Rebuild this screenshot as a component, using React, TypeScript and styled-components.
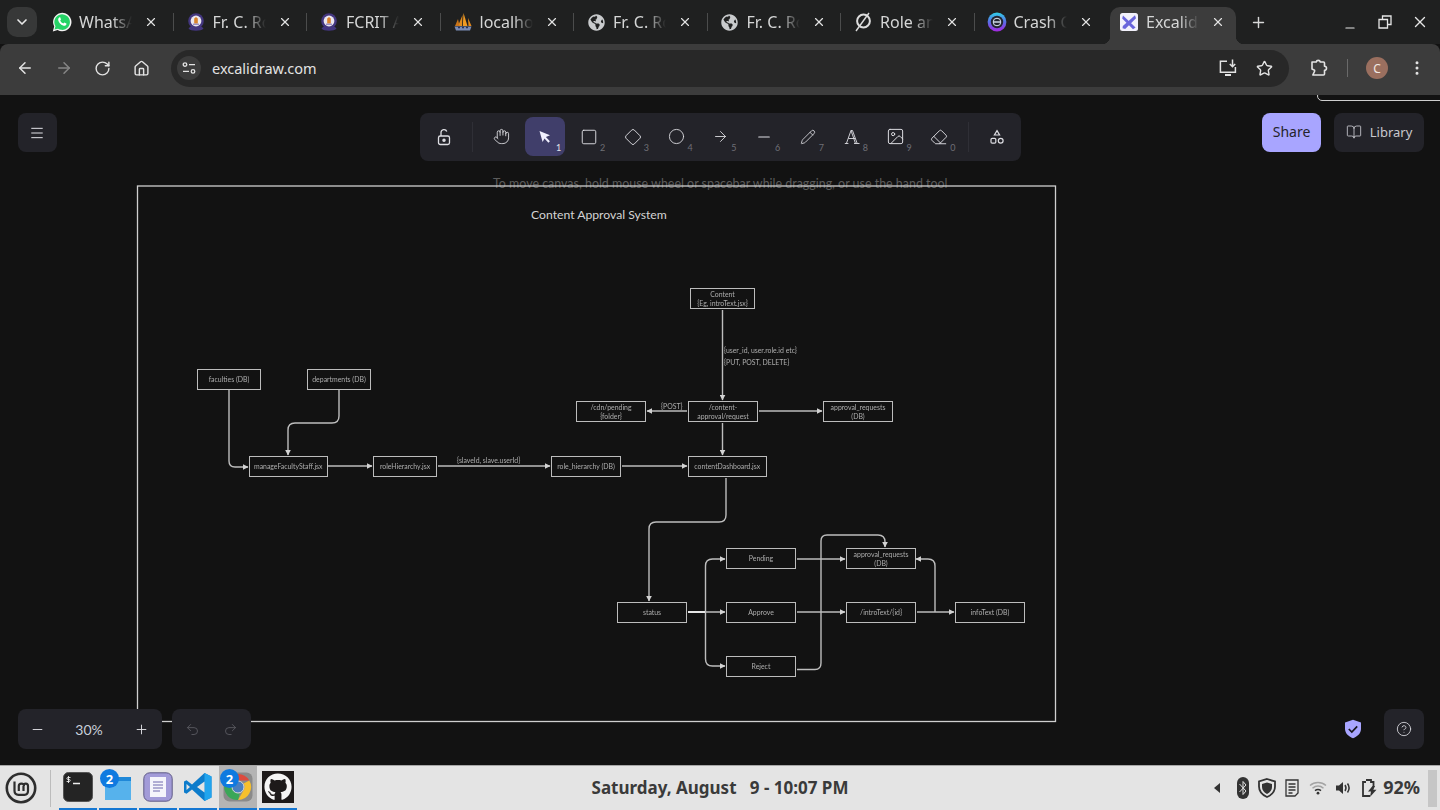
import React from 'react';
import styled, { createGlobalStyle } from 'styled-components';
import {
  ArrowLeft, ArrowRight, Circle, Diamond, Eraser, Hand, Home, Image as ImageIcon,
  Menu, Minus, MoreVertical, Pencil, Plus, RotateCw, Square, Star, X, ChevronDown,
  Redo2, Undo2, CircleHelp, BookOpen, Minus as LineIcon,
} from 'lucide-react';
import { FaGlobeAmericas, FaGithub } from 'react-icons/fa';

const CHROME_FONT = '"Noto Sans", "Open Sans", sans-serif';
const APP_FONT = 'Lato, "Noto Sans", sans-serif';
const CANVAS_TOP = 95;

const Global = createGlobalStyle`
  html, body { margin: 0; padding: 0; height: 100%; overflow: hidden; background: #121212; }
  #root { height: 100%; }
  * { box-sizing: border-box; }
`;

const Page = styled.div`
  width: 1440px;
  height: 810px;
  display: flex;
  flex-direction: column;
  font-family: ${CHROME_FONT};
  overflow: hidden;
`;

/* ---- browser tabs ---- */
const TabStrip = styled.div`
  height: 44px;
  background: #1f2020;
  display: flex;
  align-items: flex-start;
  padding-left: 7px;
`;
const TabSearch = styled.div`
  width: 30px;
  height: 30px;
  margin: 7px 3px 0 0;
  border-radius: 10px;
  background: #373838;
  color: #e8e8e8;
  display: flex;
  align-items: center;
  justify-content: center;
`;
const Tab = styled.div<{ $active?: boolean; $sep?: boolean }>`
  position: relative;
  width: ${p => (p.$active ? '126px' : '133.5px')};
  height: ${p => (p.$active ? '37px' : '30px')};
  margin: ${p => (p.$active ? '7px 0 0 2px' : '7px 0 0 0')};
  padding-left: ${p => (p.$active ? '9px' : '12px')};
  padding-bottom: ${p => (p.$active ? '7px' : '0')};
  display: flex;
  align-items: center;
  align-self: flex-start;
  color: #d5d6d6;
  background: ${p => (p.$active ? '#3c3c3c' : 'transparent')};
  border-radius: 10px 10px 0 0;

  &::after {
    content: '';
    display: ${p => (p.$sep ? 'block' : 'none')};
    position: absolute;
    right: 0;
    top: 6px;
    width: 1px;
    height: 18px;
    background: #4b4c4c;
  }
  &::before {
    content: '';
    display: ${p => (p.$active ? 'block' : 'none')};
    position: absolute;
    left: -8px;
    right: -8px;
    bottom: 0;
    height: 8px;
    background:
      radial-gradient(circle at 0 0, #1f2020 8px, #3c3c3c 8.5px) left / 8px 8px no-repeat,
      radial-gradient(circle at 100% 0, #1f2020 8px, #3c3c3c 8.5px) right / 8px 8px no-repeat;
  }
`;
const Favicon = styled.span`
  width: 20px;
  height: 20px;
  flex: none;
  display: flex;
  align-items: center;
  justify-content: center;
`;
const TabTitle = styled.span`
  width: 54px;
  margin-left: 7px;
  font-size: 16px;
  line-height: 22px;
  white-space: nowrap;
  overflow: hidden;
  -webkit-mask-image: linear-gradient(90deg, #000 62%, transparent 98%);
  mask-image: linear-gradient(90deg, #000 62%, transparent 98%);
`;
const TabClose = styled.span`
  margin-left: 11px;
  display: flex;
  color: #e2e2e2;
`;
const NewTab = styled.div`
  width: 30px;
  height: 30px;
  margin: 7px 0 0 7px;
  color: #d8d8d8;
  display: flex;
  align-items: center;
  justify-content: center;
`;
const WindowControls = styled.div`
  margin-left: auto;
  height: 44px;
  padding-right: 3px;
  display: flex;
  align-items: center;
  color: #e6e6e6;
`;
const WindowButton = styled.span<{ $low?: boolean }>`
  width: 35px;
  display: flex;
  justify-content: center;
  padding-top: ${p => (p.$low ? '12px' : '0')};
`;

/* ---- browser toolbar ---- */
const BrowserBar = styled.div`
  height: 51px;
  background: #3c3c3c;
  border-radius: 8px 8px 0 0;
  display: flex;
  align-items: center;
  padding: 0 0 3px 5px;
`;
const NavButton = styled.span<{ $dim?: boolean; $push?: number }>`
  width: 39px;
  height: 36px;
  flex: none;
  margin-left: ${p => p.$push ?? 0}px;
  display: flex;
  align-items: center;
  justify-content: center;
  color: ${p => (p.$dim ? '#868686' : '#e3e3e3')};
`;
const Omnibox = styled.div`
  width: 1118px;
  height: 37px;
  margin: 0 10px;
  flex: none;
  border-radius: 19px;
  background: #282828;
  display: flex;
  align-items: center;
  padding: 0 7px 0 6px;
  color: #e3e3e3;
`;
const SiteChip = styled.span`
  width: 24px;
  height: 24px;
  border-radius: 50%;
  background: #3c3c3c;
  display: flex;
  align-items: center;
  justify-content: center;
`;
const Url = styled.span`
  margin-left: 11px;
  font-size: 14.5px;
  flex: 1;
`;
const OmniIcon = styled.span`
  width: 36px;
  display: flex;
  justify-content: center;
`;
const BarDivider = styled.span`
  width: 1px;
  height: 18px;
  background: #6a6a6a;
  flex: none;
  margin: 0 18px 0 9px;
`;
const Avatar = styled.span`
  width: 22px;
  height: 22px;
  border-radius: 50%;
  background: #9a6f5f;
  color: #f2e8e4;
  font-size: 12px;
  display: flex;
  align-items: center;
  justify-content: center;
  flex: none;
`;

/* ---- excalidraw ---- */
const Canvas = styled.main`
  position: relative;
  flex: 1;
  background: #121212;
  font-family: ${APP_FONT};
  overflow: hidden;
`;
const Hint = styled.div`
  position: absolute;
  left: 493px;
  top: ${175.5 - CANVAS_TOP}px;
  font-size: 12.45px;
  line-height: 15px;
  color: #5c5c5c;
  white-space: nowrap;
`;
const Wires = styled.svg`
  position: absolute;
  inset: 0;
  width: 1440px;
  height: 670px;
  filter: blur(0.2px);
`;
const Node = styled.div<{ $x: number; $y: number; $w: number }>`
  position: absolute;
  left: ${p => p.$x}px;
  top: ${p => p.$y - CANVAS_TOP}px;
  width: ${p => p.$w}px;
  height: 21px;
  border: 1.4px solid #bcbcbc;
  display: flex;
  align-items: center;
  justify-content: center;
  text-align: center;
  font-size: 6.9px;
  line-height: 8.2px;
  color: #adadad;
  white-space: pre-line;
  filter: blur(0.25px);
`;
const EdgeLabel = styled.span<{ $x: number; $y: number }>`
  position: absolute;
  left: ${p => p.$x}px;
  top: ${p => p.$y - CANVAS_TOP}px;
  font-size: 6.9px;
  line-height: 8px;
  color: #adadad;
  white-space: nowrap;
  filter: blur(0.25px);
`;
const Title = styled.span`
  position: absolute;
  left: 531px;
  top: ${208 - CANVAS_TOP}px;
  font-size: 12.2px;
  line-height: 14px;
  color: #d4d4d4;
  white-space: nowrap;
`;
const TopUi = styled.div`
  position: absolute;
  top: 18px;
  left: 18px;
  right: 16px;
  display: grid;
  grid-template-columns: 1fr auto 1fr;
  align-items: start;
`;
const Panel = styled.div`
  background: #232329;
  border-radius: 8px;
`;
const SquareButton = styled(Panel)`
  width: 39px;
  height: 39px;
  padding-right: 1px;
  display: flex;
  align-items: center;
  justify-content: center;
  color: #e3e3e8;
`;
const Tools = styled(Panel)`
  height: 48px;
  padding: 4px;
  margin-right: 1px;
  display: flex;
  gap: 3.8px;
  align-items: flex-start;
`;
const ToolButton = styled.div<{ $selected?: boolean }>`
  position: relative;
  width: 40px;
  height: 39px;
  border-radius: 8px;
  flex: none;
  background: ${p => (p.$selected ? '#403e6a' : 'transparent')};
  color: #dedee3;
  display: flex;
  align-items: center;
  justify-content: center;
`;
const KeyHint = styled.span<{ $selected?: boolean }>`
  position: absolute;
  right: 4px;
  bottom: 3px;
  font-size: 9px;
  line-height: 11px;
  color: ${p => (p.$selected ? '#e3e3e8' : '#6f6f76')};
`;
const ToolDivider = styled.span`
  width: 1px;
  height: 30px;
  margin: 5px 4.5px 0;
  flex: none;
  background: #2f2f36;
`;
const RightActions = styled.div`
  justify-self: end;
  display: flex;
  gap: 13px;
`;
const ShareButton = styled.div`
  width: 59px;
  height: 39px;
  padding-bottom: 2px;
  border-radius: 8px;
  background: #a8a5ff;
  color: #24242b;
  font-size: 14px;
  font-family: ${CHROME_FONT};
  display: flex;
  align-items: center;
  justify-content: center;
`;
const LibraryButton = styled(Panel)`
  width: 90px;
  height: 39px;
  padding-bottom: 2px;
  display: flex;
  align-items: center;
  justify-content: center;
  gap: 8px;
  color: #c8c8ce;
  font-size: 13px;
  font-family: ${CHROME_FONT};
`;
const BottomUi = styled.div`
  position: absolute;
  left: 18px;
  right: 16px;
  bottom: 16px;
  display: flex;
  align-items: center;
`;
const ZoomGroup = styled(Panel)`
  width: 144px;
  height: 40px;
  padding-right: 2px;
  display: flex;
  align-items: center;
  color: #dedee3;
`;
const ZoomStep = styled.span`
  width: 38px;
  display: flex;
  justify-content: center;
`;
const ZoomValue = styled.span`
  flex: 1;
  text-align: center;
  font-size: 14px;
  color: #c8d0da;
`;
const HistoryGroup = styled(Panel)`
  width: 79px;
  height: 40px;
  margin-left: 10px;
  display: flex;
  align-items: center;
  justify-content: space-around;
  padding: 0 1px;
  color: #5b5b62;
`;
const ShieldMark = styled.span`
  margin-left: auto;
  margin-right: 22px;
  display: flex;
`;
const HelpButton = styled(Panel)`
  width: 40px;
  height: 40px;
  display: flex;
  align-items: center;
  justify-content: center;
  color: #d8d8dd;
`;
const StrayLine = styled.div`
  position: absolute;
  left: 1317px;
  top: -4px;
  width: 140px;
  height: 10px;
  border: 1.4px solid #cfcfcf;
  border-radius: 6px;
`;

/* ---- desktop taskbar ---- */
const Taskbar = styled.footer`
  height: 45px;
  background: #e4e4e4;
  border-top: 1px solid #a7a7a7;
  display: grid;
  grid-template-columns: 1fr auto 1fr;
  align-items: center;
`;
const TaskLeft = styled.div`
  display: flex;
  align-items: center;
  height: 100%;
`;
const MintSlot = styled.div`
  width: 50px;
  height: 100%;
  padding-right: 8px;
  display: flex;
  align-items: center;
  justify-content: center;
`;
const TaskDivider = styled.span`
  width: 1px;
  height: 37px;
  background: #bcbcbc;
  margin-right: 8px;
`;
const AppList = styled.div`
  height: 100%;
  display: flex;
  gap: 2px;
`;
const AppSlot = styled.div<{ $active?: boolean }>`
  position: relative;
  width: 38px;
  height: 100%;
  display: flex;
  align-items: center;
  justify-content: center;
  padding-bottom: 1px;
  background: ${p => (p.$active ? '#b4b4b4' : 'transparent')};
  border-bottom: 2px solid #1577d2;
`;
const Badge = styled.span`
  position: absolute;
  left: 1px;
  top: 3px;
  width: 19px;
  height: 19px;
  border-radius: 50%;
  background: #0f7ae0;
  color: #fff;
  font-size: 13px;
  font-weight: 700;
  display: flex;
  align-items: center;
  justify-content: center;
`;
const Clock = styled.div`
  font-size: 17px;
  font-weight: 700;
  color: #3a3a3a;
  white-space: pre;
  padding-bottom: 2px;
`;
const Tray = styled.div`
  justify-self: end;
  display: flex;
  align-items: center;
  height: 100%;
  padding-right: 3px;
  color: #2f2f2f;
`;
const TrayIcon = styled.span<{ $w?: number }>`
  width: ${p => p.$w ?? 26}px;
  display: flex;
  justify-content: center;
`;
const Battery = styled.span`
  font-size: 18px;
  font-weight: 700;
  color: #3a3a3a;
  padding-bottom: 2px;
`;
const Grip = styled.span`
  width: 9px;
  height: 37px;
  margin-left: 8px;
  background: #c6c6c6;
`;

/* ---- little drawings ---- */
const WhatsappMark = () => (
  <svg width="20" height="20" viewBox="0 0 20 20">
    <path d="M.8 19.400 2.200 14.500A9.200 9.200 0 1 1 5.600 18z" fill="#f4f4f4" />
    <path d="M2.500 17.600 3.500 14.200A7.800 7.800 0 1 1 6 16.700z" fill="#25d366" />
    <path d="M7.300 5.600c-.7.400-1.400 1.500-1 3 .5 2 2.500 4.200 4.700 5 1.500.5 2.700 0 3.200-.8.300-.5.300-1.200.2-1.400l-2.100-1-.9 1.100c-1.400-.5-2.600-1.700-3.200-3.100l.8-1-.8-2.100c-.3-.1-.6-.1-.9.300z" fill="#fff" />
  </svg>
);
const Crest = () => (
  <svg width="18" height="20" viewBox="0 0 18 20">
    <path d="M1.500 16.500c2 3 13 3 15 0l-1.500-1.500H3z" fill="#43367f" />
    <circle cx="9" cy="9" r="7.800" fill="#43367f" />
    <circle cx="9" cy="9" r="5.400" fill="#e9e6ef" />
    <path d="M7.200 6.500 9 5l1.800 1.500v5H7.200z" fill="#d9822b" />
    <path d="M6 12.200h6" stroke="#7a6bb0" strokeWidth="1" />
  </svg>
);
const Sails = () => (
  <svg width="20" height="20" viewBox="0 0 20 20">
    <path d="M10.500 1 14.500 14H9.800z" fill="#f09a23" />
    <path d="M9.500 3 9 14H5z" fill="#e08a1e" />
    <path d="M5 7 6.500 14H2z" fill="#c9741a" />
    <path d="M15 6 18.500 14H15.500z" fill="#e88a1a" />
    <path d="M1.500 14.500h17L17 18.500H3z" fill="#7a8bb5" />
    <path d="M5 15.500h2M9 15.500h2M13 15.500h2" stroke="#2a3358" strokeWidth="1.400" />
  </svg>
);
const SlashedRing = () => (
  <svg width="20" height="22" viewBox="0 0 20 22" fill="none" stroke="#dcdcdc" strokeWidth="2">
    <circle cx="10.500" cy="10" r="6.400" />
    <path d="M16 2 3 20" strokeWidth="1.400" />
  </svg>
);
const CrashMark = () => (
  <svg width="20" height="20" viewBox="0 0 20 20">
    <defs>
      <linearGradient id="crash" x1="0" y1="0" x2="0" y2="1">
        <stop offset="0" stopColor="#2fd0e8" />
        <stop offset=".5" stopColor="#5a6de6" />
        <stop offset="1" stopColor="#a428e0" />
      </linearGradient>
    </defs>
    <circle cx="10" cy="10" r="9.400" fill="url(#crash)" />
    <circle cx="10" cy="10" r="6.200" fill="#23252f" />
    <circle cx="10" cy="10" r="3.800" fill="none" stroke="#dbe6f3" strokeWidth="1" />
    <path d="M6.500 10h7" stroke="#dbe6f3" strokeWidth="1.400" />
  </svg>
);
const ExcalidrawMark = () => (
  <svg width="18" height="18" viewBox="0 0 18 18">
    <rect width="18" height="18" rx="2.500" fill="#f2f1fb" />
    <path d="M3 2.500 15.600 14.500 13 16.200 2.200 5.400z" fill="#6965db" />
    <path d="M15 2.200 16 5.200 5.200 16 2.500 15.300 2.800 13z" fill="#6965db" />
  </svg>
);
const InstallIcon = () => (
  <svg width="20" height="20" viewBox="0 0 20 20" fill="none" stroke="#e3e3e3" strokeWidth="1.500">
    <path d="M9 3.200H2.400v11h15V9" />
    <path d="M7 17h6" strokeWidth="2" />
    <path d="M14.500 1.500v7M11.800 6l2.700 2.700L17.200 6" />
  </svg>
);
const SiteInfoIcon = () => (
  <svg width="14" height="14" viewBox="0 0 14 14" fill="none" stroke="#e3e3e3" strokeWidth="1.300">
    <circle cx="3" cy="3.600" r="1.800" />
    <path d="M7 3.600h6M1 10.400h6" />
    <circle cx="11" cy="10.400" r="1.800" />
  </svg>
);
const ExtensionIcon = () => (
  <svg width="18" height="20" viewBox="0 0 18 20" fill="none" stroke="#e3e3e3" strokeWidth="1.600" strokeLinejoin="round">
    <path d="M2 4h4.200a2.100 2.100 0 0 1 4.100 0h3.200a1 1 0 0 1 1 1v3.300a2 2 0 0 1 0 4V16a1 1 0 0 1-1 1H2.800l1.700-3.500c.5-1-.2-1.600-.9-1.800L2 11z" />
  </svg>
);
const UnlockIcon = () => (
  <svg width="16" height="18" viewBox="0 0 16 18" fill="none" stroke="#dedee3" strokeWidth="1.300">
    <rect x="2.500" y="8" width="11" height="8.500" rx="1.800" />
    <path d="M5 8V4.500a3 3 0 0 1 5.800-1" />
    <circle cx="8" cy="12.200" r="1.100" fill="#dedee3" />
  </svg>
);
const Pointer = () => (
  <svg width="16" height="16" viewBox="0 0 16 16">
    <path d="M2.500 2 13 6.200 8.900 8l4 4.300-1.500 1.400-3.900-4.300L5.600 13z" fill="#f1f0ff" />
  </svg>
);
const TextTool = () => (
  <svg width="18" height="18" viewBox="0 0 18 18" fill="none" stroke="#dedee3" strokeWidth=".9">
    <path d="M1.800 15.500h3.600M11 15.500h5.500M3.400 15.500 8 2.500h1.500L14.200 15.500M5.400 10.500h6.800M8 2.500 12.500 15.500" />
  </svg>
);
const ShapesTool = () => (
  <svg width="16" height="16" viewBox="0 0 16 16" fill="none" stroke="#dedee3" strokeWidth="1.200">
    <path d="M8 1.600 10.600 6H5.400z" />
    <rect x="2" y="9.400" width="4.800" height="4.800" rx="1.200" />
    <circle cx="11.700" cy="11.800" r="2.400" />
  </svg>
);
const Shield = () => (
  <svg width="18" height="20" viewBox="0 0 18 20">
    <path d="M9 .8 17 3.400v6.400c0 4.400-3.200 7.600-8 9.400-4.800-1.800-8-5-8-9.400V3.400z" fill="#a8a5ff" />
    <path d="m4.800 10 3 3 5.400-5.600" fill="none" stroke="#16161c" strokeWidth="1.700" />
  </svg>
);
const MintLogo = () => (
  <svg width="32" height="32" viewBox="0 0 32 32" fill="none" stroke="#2e2e2e">
    <circle cx="16" cy="16" r="14.200" strokeWidth="2.600" />
    <path d="M9.500 9.500v9.300c0 2.500 1.500 4 4 4h6c2.500 0 3.500-1.500 3.500-4V14c0-3.200-4.500-3.200-4.500 0v5M19 14c0-3.200-5.200-3.200-5.200 0v5" strokeWidth="2.200" />
  </svg>
);
const TerminalApp = () => (
  <svg width="30" height="30" viewBox="0 0 30 30">
    <rect x=".5" y=".5" width="29" height="29" rx="5" fill="#242424" stroke="#555" />
    <path d="M5.500 4v7M7.500 5.500H4.800c-1.200 0-1.200 2 0 2h1.500c1.200 0 1.200 2 0 2H3.600" fill="none" stroke="#eee" strokeWidth=".9" />
    <path d="M10 11.500h7" stroke="#eee" strokeWidth="1.500" />
  </svg>
);
const FolderApp = () => (
  <svg width="30" height="30" viewBox="0 0 30 30">
    <path d="M2 7h9l2 2h15v19H2z" fill="#56b2ec" />
    <path d="M12 5h16v4H14z" fill="#1f88d8" />
  </svg>
);
const NotesApp = () => (
  <svg width="30" height="30" viewBox="0 0 30 30">
    <rect x=".8" y=".8" width="28.400" height="28.400" rx="6" fill="#a29bd8" stroke="#5f5a86" />
    <rect x="7" y="5" width="16" height="20" fill="#f5f5fb" />
    <path d="M10 10h10M10 13h10M10 16h10M10 19h7" stroke="#6f68ad" strokeWidth="1" />
  </svg>
);
const CodeApp = () => (
  <svg width="30" height="30" viewBox="0 0 30 30">
    <path d="M21.500 1 28.500 4.500v21L21.500 29 9 17.500l-5.500 4.300L1 20.500v-11l2.500-1.300L9 12.500z" fill="#0d7ccb" />
    <path d="M21.500 1 28.500 4.500v21L21.500 29z" fill="#21a4ee" />
    <path d="M21.500 9.500 14 15l7.500 5.500z" fill="#e4e4e4" />
    <path d="M3.500 12 7 15l-3.500 3z" fill="#e4e4e4" />
  </svg>
);
const ChromeApp = () => (
  <svg width="30" height="30" viewBox="0 0 30 30">
    <rect x=".5" y=".5" width="29" height="29" rx="6" fill="#8a8a8a" />
    <path d="M15 2a13 13 0 0 1 11.300 6.500H15a6.500 6.500 0 0 0-5.700 3.400L4.500 6.500A13 13 0 0 1 15 2z" fill="#dd4b3e" />
    <path d="M26.300 8.500A13 13 0 0 1 15 28l5.600-9.800A6.500 6.500 0 0 0 20.600 11.500z" fill="#f6c02d" />
    <path d="M15 28A13 13 0 0 1 4.500 6.500l5.300 9.400a6.500 6.500 0 0 0 7 5.400z" fill="#3aa757" />
    <circle cx="15" cy="15" r="6" fill="#4a7fc0" stroke="#d9d9d9" strokeWidth="1" />
  </svg>
);
const GithubSquare = styled.span`
  width: 32px;
  height: 32px;
  background: #1d1a1a;
  display: flex;
  align-items: center;
  justify-content: center;
`;
const BluetoothPill = () => (
  <svg width="12" height="22" viewBox="0 0 12 22">
    <rect width="12" height="22" rx="6" fill="#333" />
    <path d="M2.500 7 9 14l-3 3.500v-13L9 8l-6.500 7" fill="none" stroke="#e4e4e4" strokeWidth="1" />
  </svg>
);
const TrayShield = () => (
  <svg width="18" height="20" viewBox="0 0 18 20">
    <path d="M9 1 17 3.500v5c0 5-3.500 8.500-8 10.500C4.500 17 1 13.500 1 8.500v-5z" fill="none" stroke="#333" strokeWidth="1.800" />
    <path d="M9 4.500 14 6v3c0 3-2 5.500-5 7-3-1.500-5-4-5-7V6z" fill="#333" />
  </svg>
);
const TrayNote = () => (
  <svg width="14" height="18" viewBox="0 0 14 18" fill="none" stroke="#333" strokeWidth="1.300">
    <path d="M1 1h12v13l-3 3H1z" />
    <path d="M3.500 5h7M3.500 8h7M3.500 11h7M3.500 14h4" />
  </svg>
);
const TrayWifi = () => (
  <svg width="18" height="14" viewBox="0 0 18 14" fill="none">
    <path d="M1 4.500c4.500-4 11.500-4 16 0" stroke="#a3a3a3" strokeWidth="1.500" />
    <path d="M3.500 7.200c3.300-2.800 7.700-2.800 11 0" stroke="#a3a3a3" strokeWidth="1.500" />
    <path d="M6 9.700c1.700-1.400 4.300-1.400 6 0" stroke="#333" strokeWidth="1.500" />
    <circle cx="9" cy="12.200" r="1.400" fill="#333" />
  </svg>
);
const TrayVolume = () => (
  <svg width="16" height="14" viewBox="0 0 16 14">
    <path d="M0 4.500h3L7 1v12L3 9.500H0z" fill="#333" />
    <path d="M9 4c1.200 1.800 1.200 4.200 0 6M11.500 2.500c2 2.800 2 6.200 0 9" fill="none" stroke="#333" strokeWidth="1.500" />
  </svg>
);
const TrayBattery = () => (
  <svg width="16" height="18" viewBox="0 0 16 18">
    <path d="M4 1h5v2h2.500v5M8 17H1V3h3" fill="none" stroke="#333" strokeWidth="1.800" />
    <path d="M10.500 7 6 12.500h3L8 18l6.500-7.200h-3.200L13 7z" fill="#333" />
  </svg>
);

/* ---- data ---- */
const tabs = [
  { title: 'WhatsApp', icon: <WhatsappMark /> },
  { title: 'Fr. C. Rodrigues', icon: <Crest /> },
  { title: 'FCRIT Admin', icon: <Crest /> },
  { title: 'localhost', icon: <Sails /> },
  { title: 'Fr. C. Rodrigues', icon: <FaGlobeAmericas size={17} color="#c9cbcd" /> },
  { title: 'Fr. C. Rodrigues', icon: <FaGlobeAmericas size={17} color="#c9cbcd" /> },
  { title: 'Role and', icon: <SlashedRing /> },
  { title: 'Crash Course', icon: <CrashMark /> },
];

const nodes = [
  { x: 197, y: 369, w: 64, label: 'faculties (DB)' },
  { x: 307, y: 369, w: 64, label: 'departments (DB)' },
  { x: 249, y: 456, w: 78.5, label: 'manageFacultyStaff.jsx' },
  { x: 373, y: 456, w: 64, label: 'roleHierarchy.jsx' },
  { x: 551, y: 456, w: 70, label: 'role_hierarchy (DB)' },
  { x: 688, y: 456, w: 78.5, label: 'contentDashboard.jsx' },
  { x: 690, y: 288, w: 65, label: 'Content\n{Eg, introText.jsx}' },
  { x: 688, y: 401, w: 70, label: '/content-\napproval/request' },
  { x: 576, y: 401, w: 70, label: '/cdn/pending\n{folder}' },
  { x: 823, y: 401, w: 70, label: 'approval_requests\n(DB)' },
  { x: 617, y: 602, w: 70, label: 'status' },
  { x: 726, y: 548, w: 70, label: 'Pending' },
  { x: 726, y: 602, w: 70, label: 'Approve' },
  { x: 726, y: 656, w: 70, label: 'Reject' },
  { x: 846, y: 548, w: 70, label: 'approval_requests\n(DB)' },
  { x: 846, y: 602, w: 70, label: '/introText/{id}' },
  { x: 955, y: 602, w: 70, label: 'infoText (DB)' },
];

const edges = [
  'M722.500 310V400',
  'M229 390V461Q229 467 235 467H248',
  'M339 390V416Q339 423 332 423H295Q288 423 288 430V455',
  'M328 466H372',
  'M438 466H550',
  'M622 466H687',
  'M687 411H647',
  'M759 411H822',
  'M722.500 423V455',
  'M726 478V515Q726 522 719 522H656Q649 522 649 529V601',
  'M688 612H725',
  'M705.500 612V566Q705.500 559 712.500 559H725',
  'M705.500 612V659Q705.500 666 712.500 666H725',
  'M797 559H845',
  'M797 612H845',
  'M797 669.500H815Q821 669.500 821 663V541Q821 535 827 535H878Q885 535 885 542V547',
  'M917 612H954',
  'M935 612V566Q935 559 928 559H916',
];

const edgeLabels = [
  { x: 724, y: 346, text: '{user_id, user.role.id etc}' },
  { x: 724, y: 358, text: '{PUT, POST, DELETE}' },
  { x: 661, y: 402, text: '{POST}' },
  { x: 457, y: 456, text: '{slaveId, slave.userId}' },
];

const tools = [
  { key: '1', icon: <Pointer />, selected: true },
  { key: '2', icon: <Square size={18} strokeWidth={1.25} /> },
  { key: '3', icon: <Diamond size={18} strokeWidth={1.25} /> },
  { key: '4', icon: <Circle size={17} strokeWidth={1.25} /> },
  { key: '5', icon: <ArrowRight size={17} strokeWidth={1.25} /> },
  { key: '6', icon: <LineIcon size={18} strokeWidth={1.5} /> },
  { key: '7', icon: <Pencil size={16} strokeWidth={1.25} /> },
  { key: '8', icon: <TextTool /> },
  { key: '9', icon: <ImageIcon size={19} strokeWidth={1.25} /> },
  { key: '0', icon: <Eraser size={18} strokeWidth={1.25} /> },
];

const App = () => {
  return (
    <Page>
      <Global />
      <TabStrip>
        <TabSearch><ChevronDown size={16} strokeWidth={2.5} /></TabSearch>
        {tabs.map((t, i) => (
          <Tab key={i} $sep={i < 7}>
            <Favicon>{t.icon}</Favicon>
            <TabTitle>{t.title}</TabTitle>
            <TabClose><X size={14} strokeWidth={2} /></TabClose>
          </Tab>
        ))}
        <Tab $active>
          <Favicon><ExcalidrawMark /></Favicon>
          <TabTitle>Excalidraw</TabTitle>
          <TabClose><X size={14} strokeWidth={2} /></TabClose>
        </Tab>
        <NewTab><Plus size={17} strokeWidth={2} /></NewTab>
        <WindowControls>
          <WindowButton $low><Minus size={14} strokeWidth={2} /></WindowButton>
          <WindowButton>
            <svg width="14" height="14" viewBox="0 0 14 14" fill="none" stroke="#e6e6e6" strokeWidth="1.3">
              <path d="M1 4.500h8.500V13H1zM4.500 4.500V1H13v8.500H9.500" />
            </svg>
          </WindowButton>
          <WindowButton><X size={18} strokeWidth={1.8} /></WindowButton>
        </WindowControls>
      </TabStrip>
      <BrowserBar>
        <NavButton><ArrowLeft size={18} /></NavButton>
        <NavButton $dim><ArrowRight size={18} /></NavButton>
        <NavButton><RotateCw size={17} /></NavButton>
        <NavButton><Home size={17} /></NavButton>
        <Omnibox>
          <SiteChip><SiteInfoIcon /></SiteChip>
          <Url>excalidraw.com</Url>
          <OmniIcon><InstallIcon /></OmniIcon>
          <OmniIcon><Star size={17} /></OmniIcon>
        </Omnibox>
        <NavButton><ExtensionIcon /></NavButton>
        <BarDivider />
        <Avatar>C</Avatar>
        <NavButton $push={9}><MoreVertical size={18} /></NavButton>
      </BrowserBar>
      <Canvas>
        <Hint>To move canvas, hold mouse wheel or spacebar while dragging, or use the hand tool</Hint>
        <StrayLine />
        <Wires viewBox={`0 ${CANVAS_TOP} 1440 670`} fill="none">
          <defs>
            <marker id="head" markerWidth="6" markerHeight="6" refX="5" refY="3" orient="auto" markerUnits="userSpaceOnUse">
              <path d="M0 .2 5.500 3 0 5.800z" fill="#d2d2d2" />
            </marker>
          </defs>
          <rect x="137.500" y="186" width="918" height="535.500" stroke="#cfcfcf" strokeWidth="1.3" />
          {edges.map(d => (
            <path key={d} d={d} stroke="#bdbdbd" strokeWidth="1.4" markerEnd="url(#head)" />
          ))}
          <path d="M688 612H705" stroke="#e6e6e6" strokeWidth="2" />
        </Wires>
        <Title>Content Approval System</Title>
        {nodes.map(n => (
          <Node key={n.x + '-' + n.y} $x={n.x} $y={n.y} $w={n.w}>{n.label}</Node>
        ))}
        {edgeLabels.map(l => (
          <EdgeLabel key={l.text} $x={l.x} $y={l.y}>{l.text}</EdgeLabel>
        ))}
        <TopUi>
          <SquareButton><Menu size={16} strokeWidth={1.5} /></SquareButton>
          <Tools>
            <ToolButton><UnlockIcon /></ToolButton>
            <ToolDivider />
            <ToolButton><Hand size={17} strokeWidth={1.25} /></ToolButton>
            {tools.map(t => (
              <ToolButton key={t.key} $selected={t.selected}>
                {t.icon}
                <KeyHint $selected={t.selected}>{t.key}</KeyHint>
              </ToolButton>
            ))}
            <ToolDivider />
            <ToolButton><ShapesTool /></ToolButton>
          </Tools>
          <RightActions>
            <ShareButton>Share</ShareButton>
            <LibraryButton><BookOpen size={16} strokeWidth={1.3} />Library</LibraryButton>
          </RightActions>
        </TopUi>
        <BottomUi>
          <ZoomGroup>
            <ZoomStep><Minus size={15} strokeWidth={1.5} /></ZoomStep>
            <ZoomValue>30%</ZoomValue>
            <ZoomStep><Plus size={15} strokeWidth={1.5} /></ZoomStep>
          </ZoomGroup>
          <HistoryGroup>
            <Undo2 size={15} strokeWidth={1.4} />
            <Redo2 size={15} strokeWidth={1.4} />
          </HistoryGroup>
          <ShieldMark><Shield /></ShieldMark>
          <HelpButton><CircleHelp size={16} strokeWidth={1.3} /></HelpButton>
        </BottomUi>
      </Canvas>
      <Taskbar>
        <TaskLeft>
          <MintSlot><MintLogo /></MintSlot>
          <TaskDivider />
          <AppList>
            <AppSlot><TerminalApp /></AppSlot>
            <AppSlot><Badge>2</Badge><FolderApp /></AppSlot>
            <AppSlot><NotesApp /></AppSlot>
            <AppSlot><CodeApp /></AppSlot>
            <AppSlot $active><Badge>2</Badge><ChromeApp /></AppSlot>
            <AppSlot><GithubSquare><FaGithub size={28} color="#f5f5f5" /></GithubSquare></AppSlot>
          </AppList>
        </TaskLeft>
        <Clock>{'Saturday, August   9 - 10:07 PM'}</Clock>
        <Tray>
          <TrayIcon $w={28}>
            <svg width="6" height="10" viewBox="0 0 6 10"><path d="M6 0v10L0 5z" fill="#333" /></svg>
          </TrayIcon>
          <TrayIcon $w={24}><BluetoothPill /></TrayIcon>
          <TrayIcon $w={24}><TrayShield /></TrayIcon>
          <TrayIcon><TrayNote /></TrayIcon>
          <TrayIcon><TrayWifi /></TrayIcon>
          <TrayIcon><TrayVolume /></TrayIcon>
          <TrayIcon><TrayBattery /></TrayIcon>
          <Battery>92%</Battery>
          <Grip />
        </Tray>
      </Taskbar>
    </Page>
  );
};

export default App;
